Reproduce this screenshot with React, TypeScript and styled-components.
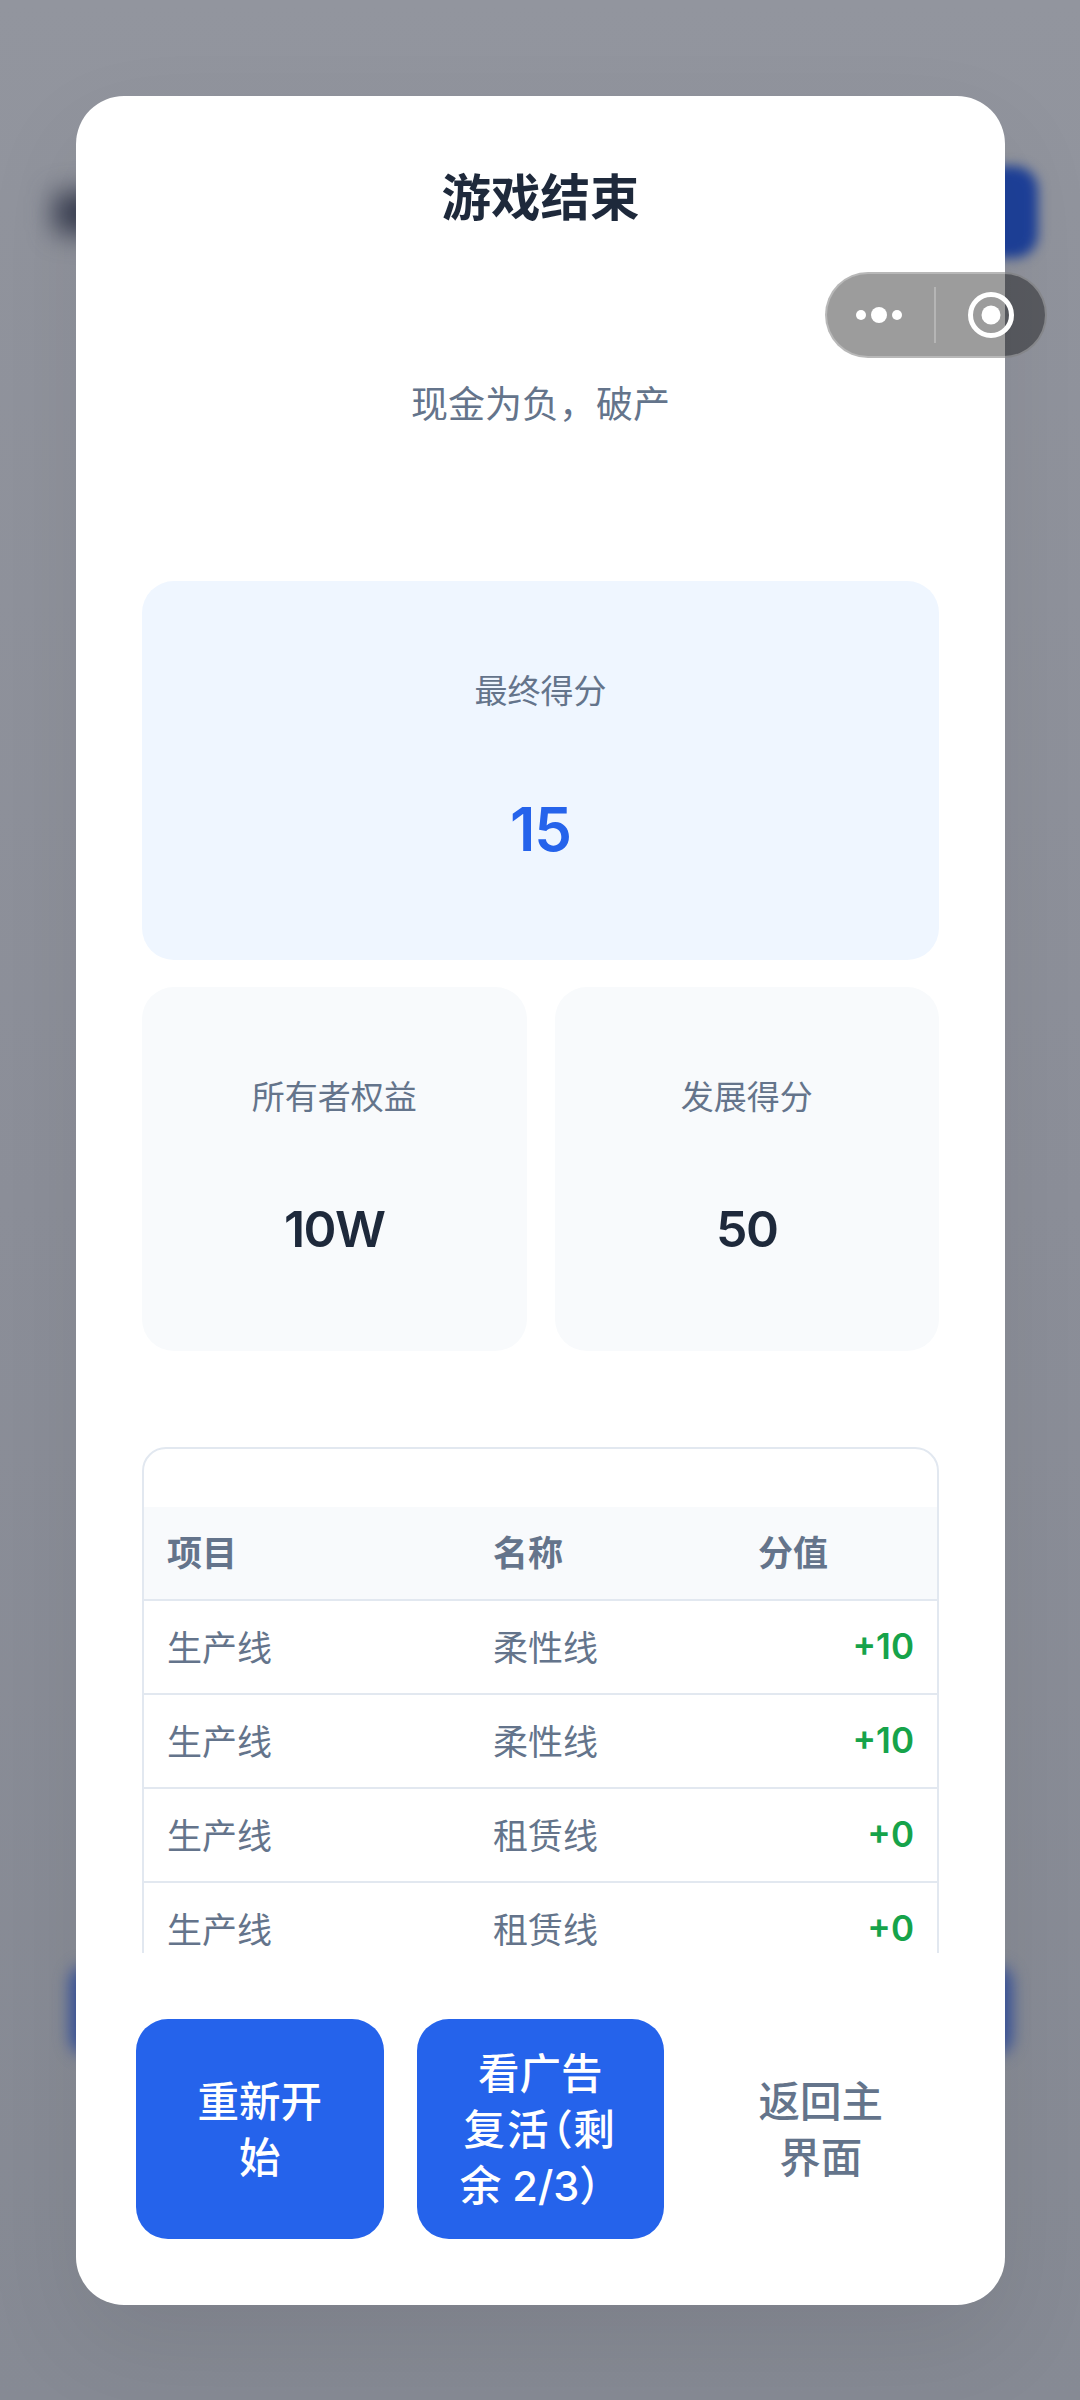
import React from "react";
import styled, { createGlobalStyle } from "styled-components";

const Global = createGlobalStyle`
  html, body { margin: 0; padding: 0; }
  body { width: 1080px; height: 2400px; overflow: hidden; font-family: Inter, "Noto Sans CJK SC", sans-serif; }
`;

const Page = styled.div`
  position: relative;
  width: 1080px;
  height: 2400px;
  overflow: hidden;
  box-sizing: border-box;
  padding: 96px 75px 95px 76px;
  background: linear-gradient(180deg, #92959e 0%, #8c8f99 50%, #868a94 100%);
`;

const BlurredTitle = styled.div`
  position: absolute;
  left: 54px;
  top: 192px;
  width: 120px;
  height: 42px;
  border-radius: 8px;
  background: #3a3f52;
  filter: blur(13px);
`;

const BlurredAction = styled.div`
  position: absolute;
  left: 900px;
  top: 166px;
  width: 138px;
  height: 92px;
  border-radius: 24px;
  background: #1d4099;
  filter: blur(6px);
`;

const BlurredBar = styled.div`
  position: absolute;
  left: 70px;
  top: 1966px;
  width: 942px;
  height: 88px;
  border-radius: 16px;
  background: #34509c;
  filter: blur(8px);
`;

const Modal = styled.main`
  position: relative;
  display: flex;
  flex-direction: column;
  height: 100%;
  background: #fff;
  border-radius: 48px;
  overflow: hidden;
  box-shadow: 0 40px 100px rgba(0, 0, 0, 0.08);
`;

const Header = styled.header`
  flex: none;
  display: flex;
  flex-direction: column;
  align-items: center;
  padding-top: 68px;
`;

const Title = styled.h1`
  margin: 0;
  font-size: 49.5px;
  line-height: 68px;
  font-weight: 600;
  color: #1e293b;
`;

const Subtitle = styled.p`
  margin: 148px 0 0;
  font-size: 37px;
  line-height: 50px;
  font-weight: 400;
  color: #64748b;
`;

const Body = styled.section`
  flex: 1;
  min-height: 0;
  overflow: hidden;
  padding: 151px 66px 0;
  display: flex;
  flex-direction: column;
`;

const ScoreCard = styled.div`
  flex: none;
  height: 379px;
  box-sizing: border-box;
  padding-top: 88px;
  border-radius: 32px;
  background: #eff6ff;
  display: flex;
  flex-direction: column;
  align-items: center;
`;

const StatLabel = styled.div`
  font-size: 33px;
  line-height: 44px;
  color: #64748b;
`;

const ScoreValue = styled.div`
  margin-top: 80px;
  font-size: 60px;
  line-height: 72px;
  font-weight: 600;
  letter-spacing: -1px;
  color: #2563eb;
`;

const StatRow = styled.div`
  flex: none;
  margin-top: 27px;
  display: grid;
  grid-template-columns: 1fr 1fr;
  gap: 28px;
`;

const StatCard = styled.div`
  height: 364px;
  box-sizing: border-box;
  padding-top: 88px;
  border-radius: 32px;
  background: #f8fafc;
  display: flex;
  flex-direction: column;
  align-items: center;
`;

const StatValue = styled.div`
  margin-top: 80px;
  font-size: 50px;
  line-height: 60px;
  font-weight: 600;
  letter-spacing: -1.5px;
  color: #1e293b;
`;

const Table = styled.div`
  flex: none;
  margin-top: 96px;
  box-sizing: border-box;
  border: 2px solid #e2e8f0;
  border-radius: 24px;
  padding-top: 58px;
`;

const TableRow = styled.div<{ $head?: boolean }>`
  display: grid;
  grid-template-columns: 326px 265px 1fr;
  align-items: center;
  height: 94px;
  box-sizing: border-box;
  padding-bottom: ${(p) => (p.$head ? "6px" : "4px")};
  border-bottom: 2px solid #e2e8f0;
  background: ${(p) => (p.$head ? "#f8fafc" : "#fff")};
  color: #64748b;
  font-size: 35px;
  font-weight: ${(p) => (p.$head ? 600 : 400)};
`;

const Cell = styled.div`
  padding: 0 23px;
`;

const PointsCell = styled(Cell)`
  padding-top: 2px;
  text-align: right;
  color: #16a34a;
  font-weight: 600;
`;

const Footer = styled.footer`
  flex: none;
  display: grid;
  grid-template-columns: repeat(3, 247.5px);
  gap: 33px;
  padding: 66px 60px 66px;
`;

const ActionButton = styled.button<{ $primary?: boolean }>`
  height: 220px;
  padding: 1px 0 0;
  border: 0;
  border-radius: 32px;
  font-family: inherit;
  font-size: 41.5px;
  line-height: 56px;
  font-weight: 500;
  white-space: nowrap;
  background: ${(p) => (p.$primary ? "#2563eb" : "transparent")};
  color: ${(p) => (p.$primary ? "#fff" : "#64748b")};
`;

const ProportionalLine = styled.span`
  font-feature-settings: "palt";
  letter-spacing: 2px;
`;

const Capsule = styled.div`
  position: absolute;
  left: 825px;
  top: 272px;
  width: 222px;
  height: 86px;
  box-sizing: border-box;
  border: 2px solid rgba(255, 255, 255, 0.28);
  border-radius: 43px;
  background: rgba(0, 0, 0, 0.39);
`;

const CapsuleIcon = styled.svg`
  display: block;
  position: absolute;
  left: -2px;
  top: -2px;
`;

const rows = [
  ["生产线", "柔性线", "+10"],
  ["生产线", "柔性线", "+10"],
  ["生产线", "租赁线", "+0"],
  ["生产线", "租赁线", "+0"],
];

export default function App() {
  return (
    <Page lang="zh-CN">
      <Global />
      <BlurredTitle />
      <BlurredAction />
      <BlurredBar />
      <Modal>
        <Header>
          <Title>游戏结束</Title>
          <Subtitle>现金为负，破产</Subtitle>
        </Header>
        <Body>
          <ScoreCard>
            <StatLabel>最终得分</StatLabel>
            <ScoreValue>15</ScoreValue>
          </ScoreCard>
          <StatRow>
            <StatCard>
              <StatLabel>所有者权益</StatLabel>
              <StatValue>10W</StatValue>
            </StatCard>
            <StatCard>
              <StatLabel>发展得分</StatLabel>
              <StatValue>50</StatValue>
            </StatCard>
          </StatRow>
          <Table>
            <TableRow $head>
              <Cell>项目</Cell>
              <Cell>名称</Cell>
              <Cell>分值</Cell>
            </TableRow>
            {rows.map((r, i) => (
              <TableRow key={i}>
                <Cell>{r[0]}</Cell>
                <Cell>{r[1]}</Cell>
                <PointsCell>{r[2]}</PointsCell>
              </TableRow>
            ))}
          </Table>
        </Body>
        <Footer>
          <ActionButton $primary>
            重新开
            <br />始
          </ActionButton>
          <ActionButton $primary>
            看广告
            <br />
            <ProportionalLine>复活（剩</ProportionalLine>
            <br />余 2/3）
          </ActionButton>
          <ActionButton>
            返回主
            <br />界面
          </ActionButton>
        </Footer>
      </Modal>
      <Capsule>
        <CapsuleIcon width="222" height="86" viewBox="0 0 222 86" aria-hidden="true">
          <circle cx="36" cy="43" r="5" fill="#fff" />
          <circle cx="54" cy="43" r="8" fill="#fff" />
          <circle cx="72" cy="43" r="5" fill="#fff" />
          <rect x="109" y="15" width="2" height="56" fill="rgba(255,255,255,0.25)" />
          <circle cx="166" cy="43" r="20.5" fill="none" stroke="#fff" strokeWidth="5" />
          <circle cx="166" cy="43" r="9.5" fill="#fff" />
        </CapsuleIcon>
      </Capsule>
    </Page>
  );
}
